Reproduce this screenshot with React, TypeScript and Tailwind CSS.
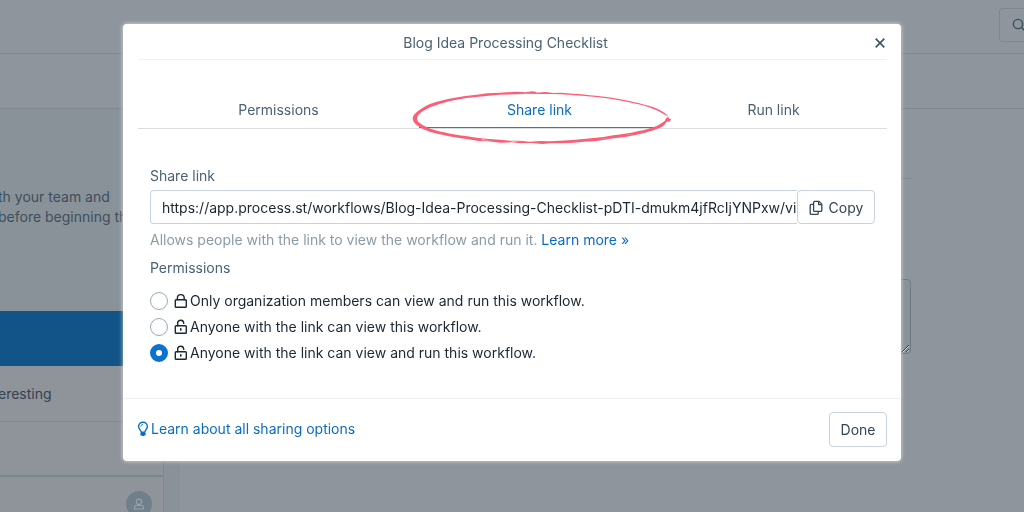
import { useState } from "react";

const tabs = ["Permissions", "Share link", "Run link"];

const options = [
  { id: "members", label: "Only organization members can view and run this workflow.", locked: true },
  { id: "view", label: "Anyone with the link can view this workflow.", locked: false },
  { id: "run", label: "Anyone with the link can view and run this workflow.", locked: false },
];

// Padlock, closed or open
function LockIcon({ locked }: { locked: boolean }) {
  return (
    <svg viewBox="0 0 14 16" className="h-4 w-3.5 shrink-0" fill="none" stroke="currentColor" strokeWidth="1.4" strokeLinejoin="round" strokeLinecap="round">
      <rect x="1.3" y="6.8" width="11" height="7.400" rx="0.8" />
      {locked ? (
        <path d="M3.400 6.700V5a3.400 3.400 0 0 1 6.800 0v1.700" />
      ) : (
        <>
          <path d="M3.700 6.700V4.600a3 3 0 0 1 6-.6v.4" />
          <path d="M6.800 9.900v1.200" strokeWidth="1.6" />
        </>
      )}
    </svg>
  );
}

function CopyIcon() {
  return (
    <svg viewBox="0 0 14 16" className="h-4 w-3.5" fill="none" stroke="currentColor" strokeWidth="1.3" strokeLinejoin="round">
      <path d="M5.6 1.4h4.5l2.7 2.7v6.3a1 1 0 0 1-1 1H5.6a1 1 0 0 1-1-1v-8a1 1 0 0 1 1-1z" />
      <path d="M9.6 1.6v3h3" />
      <path d="M4.6 4.4H2.2a1 1 0 0 0-1 1v8a1 1 0 0 0 1 1h6a1 1 0 0 0 1-1v-2" />
    </svg>
  );
}

function BulbIcon() {
  return (
    <svg viewBox="0 0 12 16" className="-ml-px h-4 w-3" fill="none" stroke="currentColor" strokeWidth="1.4" strokeLinejoin="round">
      <path d="M4.2 11.2C4.2 9.4 1.6 8.2 1.6 5.6a4.4 4.4 0 0 1 8.8 0C10.4 8.2 7.8 9.4 7.8 11.2z" />
      <path d="M3.9 5.5A2.1 2.1 0 0 1 6 3.500" strokeWidth="0.9" />
      <path d="M4 12.800h4v1H4zM5 14.300h2" />
    </svg>
  );
}

// Hand drawn circle round the active tab
function Scribble() {
  return (
    <svg viewBox="0 0 840 240" className="pointer-events-none absolute -top-3 left-1/2 h-20 w-[280px] max-w-none -translate-x-1/2" fill="#fb5f78">
      <path
        d="M808 117C806 108 800 104 794 99C785 93 774 87 760 82C742 76 720 70 700 66C675 60 648 55 620 51C588 47 552 43 520 41L484 38L460 39L438 36L418 37L396 34L376 37L350 35L300 38L262 40L230 44L196 48L160 54C138 58 118 63 100 68C82 74 66 83 54 93C44 101 38 108 38 117C39 128 52 139 74 149C90 156 110 161 130 165C152 170 176 174 200 177L236 183L266 184L300 188L336 187L360 190L392 189L428 192L452 190L490 190L520 188L552 185L590 183L622 178L642 175L680 170L720 162C744 156 770 148 786 140C794 135 797 130 800 125C806 127 813 123 813 116Z
        M806 111C799 112 795 119 796 121C788 128 780 133 772 137C752 145 734 150 716 153C692 159 666 163 640 166L610 171L580 174L550 177L518 180L480 182L450 184L420 183L390 185L360 182L330 182L300 179L266 177L230 173L202 169C176 166 152 162 132 157C112 153 94 148 80 141C62 133 52 126 51 117C51 108 58 101 68 94C78 87 90 81 104 77C122 71 142 65 162 61L200 54L230 51L266 47L300 44L350 43L380 41L420 42L452 42L484 43L520 46C554 48 588 50 620 55C648 59 674 64 700 70C720 74 742 79 758 86C772 91 784 97 792 103C799 107 803 109 806 111Z"
        fillRule="evenodd"
      />
      <path d="M410 36l22 2-26 1zM500 41l26 2-20 0zM240 180l30 2-20-4zM330 185l38 1-30-3zM600 178l30-4-24 2zM680 166l22-5-20 3z" fill="#fff" opacity="0.6" />
    </svg>
  );
}

function Backdrop() {
  return (
    <div className="flex min-h-screen flex-col bg-[#8e959d] text-sm text-[#3d4f5c]">
      <header className="flex h-[54px] items-start justify-end border-b border-[#7d8891] pt-2">
        <button aria-label="Search" className="h-[34px] w-[25px] rounded-l border border-r-0 border-[#7d8891] pl-3">
          <svg viewBox="0 0 14 14" className="h-3.5 w-3.5" fill="none" stroke="currentColor" strokeWidth="1.4">
            <circle cx="6" cy="6" r="4.6" />
            <path d="M9.5 9.5l4 4" />
          </svg>
        </button>
      </header>
      <div className="h-[55px] border-b border-[#7d8891]" />
      <div className="flex flex-1">
        <aside className="flex w-[164px] shrink-0 flex-col border-r border-[#7f8991] bg-[#8a9299]">
          <div className="-ml-0.5 h-[202px] pt-[78px] leading-5 whitespace-nowrap">
            <p>th your team and</p>
            <p>before beginning th</p>
          </div>
          <div className="h-[55px] bg-[#125487]" />
          <div className="flex h-14 items-center border-b border-[#7f8991] bg-[#8e949a] text-[#35434f]">
            <span className="-ml-0.5">eresting</span>
          </div>
          <div className="h-[55px] border-b-2 border-[#7b8790] bg-[#8e949a]" />
          <div className="flex flex-1 justify-end bg-[#8e949a] pt-3.5 pr-[11px]">
            <div className="flex h-[26px] w-[26px] items-center justify-center rounded-full bg-[#70808b] text-[#96a1a9]">
              <svg viewBox="0 0 12 12" className="h-3 w-3" fill="none" stroke="currentColor" strokeWidth="1.2">
                <circle cx="6" cy="3.8" r="2.7" />
                <path d="M1.5 11V9.5c0-1.2 1-2 2-2h5c1 0 2 .8 2 2V11z" />
              </svg>
            </div>
          </div>
        </aside>
        <div className="w-4 bg-[#8a9299]" />
        <main className="flex-1 pt-[69px] pr-[113px]">
          <div className="border-t border-[#7d8891]" />
          <textarea aria-label="Description" className="mt-[100px] block h-[75px] w-full rounded border border-[#6e7a84] bg-[#89929a]" />
        </main>
      </div>
    </div>
  );
}

export default function App() {
  const [tab, setTab] = useState("Share link");
  const [access, setAccess] = useState("run");

  return (
    <div className="h-screen overflow-hidden font-['Inter',sans-serif]">
      <Backdrop />

      <div className="fixed inset-0 flex items-start justify-center pt-6">
        <div role="dialog" aria-labelledby="title" className="w-full max-w-[778px] rounded bg-white text-sm leading-5 text-[#1b2733] shadow-[0_0_4px_rgba(255,255,255,0.7)]">
          <div className="mr-3.5 ml-[15px] flex h-9 items-center border-b border-[#eef0f1] pt-0.5">
            <h1 id="title" className="flex-1 text-center text-[#4a6273]">Blog Idea Processing Checklist</h1>
            <button aria-label="Close" className="w-3.5 text-[#3f5868]">
              <svg viewBox="0 0 14 14" className="h-3.5 w-3.5" fill="none" stroke="currentColor" strokeWidth="1.7">
                <path d="M2.700 2.700l8.600 8.600M11.300 2.700l-8.600 8.600" />
              </svg>
            </button>
          </div>

          <div role="tablist" className="mr-3.5 ml-[15px] mt-8 grid grid-cols-[281fr_241fr_227fr] border-b border-[#d9dee1]">
            {tabs.map((t) => (
              <button
                key={t}
                role="tab"
                aria-selected={t === tab}
                onClick={() => setTab(t)}
                className={
                  t === tab
                    ? "relative h-9 border-b border-[#1a80d8] text-[#0b6cc4]"
                    : "h-9 border-b border-transparent text-[#4a6273]"
                }
              >
                {t}
                {t === "Share link" && <Scribble />}
              </button>
            ))}
          </div>

          <div className="px-[27px] pt-[37px] pb-8">
            <label htmlFor="link" className="block text-[#4a6273]">Share link</label>
            <div className="-mr-px mt-1 flex h-[34px]">
              <input
                id="link"
                readOnly
                value="https://app.process.st/workflows/Blog-Idea-Processing-Checklist-pDTI-dmukm4jfRcIjYNPxw/view"
                className="min-w-0 flex-1 rounded-l border border-r-0 border-[#c9d3db] pt-px pl-[11px] outline-none"
              />
              <button className="flex w-[78px] items-center justify-center gap-1.5 rounded border border-[#c9d3db] pt-px text-[#344654]">
                <CopyIcon />
                Copy
              </button>
            </div>
            <p className="mt-1.5 text-[#8a9ba8]">
              Allows people with the link to view the workflow and run it.{" "}
              <a href="#more" className="text-[#0b6cc4]">Learn more »</a>
            </p>

            <fieldset className="mt-2">
              <legend className="text-[#4a6273]">Permissions</legend>
              <div className="mt-2.5">
                {options.map((o) => (
                  <label key={o.id} className="flex h-[26px] items-center">
                    <input
                      type="radio"
                      name="access"
                      checked={access === o.id}
                      onChange={() => setAccess(o.id)}
                      className="mr-1.5 h-[18px] w-[18px] appearance-none rounded-full border border-[#9aaab7] bg-white checked:border-[6px] checked:border-[#0b73cf]"
                    />
                    <LockIcon locked={o.locked} />
                    <span className="ml-0.5">{o.label}</span>
                  </label>
                ))}
              </div>
            </fieldset>
          </div>

          <div className="flex items-center justify-between border-t border-[#eef0f1] pt-[13px] pr-3.5 pb-3.5 pl-[15px]">
            <a href="#sharing" className="flex items-center gap-0.5 pb-0.5 text-[#0b6cc4]">
              <BulbIcon />
              Learn about all sharing options
            </a>
            <button className="h-[35px] w-[58px] rounded border border-[#c9d3db] text-[#344654]">Done</button>
          </div>
        </div>
      </div>
    </div>
  );
}
